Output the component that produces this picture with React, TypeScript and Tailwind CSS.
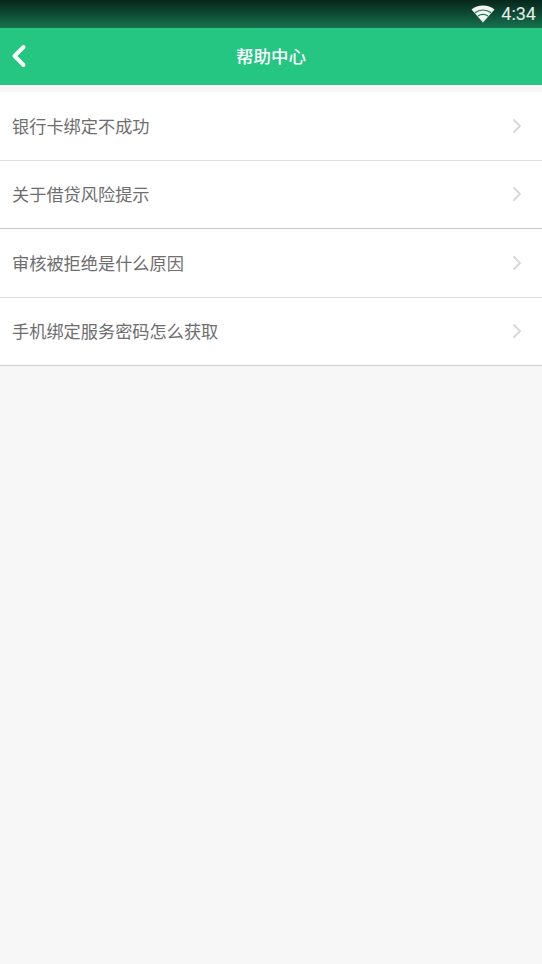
import { ChevronLeft, ChevronRight } from "lucide-react"

const items = [
  { title: "银行卡绑定不成功", h: "h-[69px]", line: "border-[#e2e2e2]" },
  { title: "关于借贷风险提示", h: "h-[68px]", line: "border-[#c9c9c9]" },
  { title: "审核被拒绝是什么原因", h: "h-[69px]", line: "border-[#dcdcdc]" },
  { title: "手机绑定服务密码怎么获取", h: "h-[68px]", line: "border-[#cfcfcf]" },
]

export default function App() {
  return (
    <div
      className="flex h-[964px] w-[542px] flex-col overflow-hidden bg-[#f7f7f7]"
      style={{ fontFamily: '"Noto Sans CJK SC", "Liberation Sans", sans-serif' }}
    >
      <div className="flex h-[28px] items-center justify-end bg-gradient-to-b from-[#07261b] to-[#16744f] pr-[6px]">
        <svg width="24" height="18" viewBox="0 0 24 18" className="mr-[6px] mb-[1px]">
          <path d="M12 17.5 0.5 4.6C3.6 2 7.6 0.5 12 0.5s8.4 1.5 11.500 4.100Z" fill="#fff" opacity="0.95" />
          <path d="M4 7.700C6.200 6 9 5 12 5s5.800 1 8 2.700" stroke="#16744f" strokeWidth="1.100" fill="none" />
          <path d="M7 11C8.400 10 10.100 9.400 12 9.400s3.600 0.600 5 1.600" stroke="#16744f" strokeWidth="1.100" fill="none" />
        </svg>
        <span className="text-[18px] leading-none text-white/90" style={{ fontFamily: "Roboto, sans-serif" }}>
          4:34
        </span>
      </div>

      <div className="relative flex h-[57px] items-center justify-center bg-[#25c681]">
        <ChevronLeft className="absolute left-[1px] top-[10px] h-[36px] w-[36px] text-white" strokeWidth={2.600} />
        <span className="text-[17.500px] font-medium text-white">帮助中心</span>
      </div>

      <div className="mt-[7px] flex flex-col bg-white">
        {items.map((item) => (
          <div
            key={item.title}
            className={`flex items-center justify-between border-b pb-[1px] pl-[12px] pr-[13px] ${item.h} ${item.line}`}
          >
            <span className="text-[17.200px] text-[#6e6e6e]">{item.title}</span>
            <ChevronRight className="h-[24px] w-[24px] text-[#d9d9d9]" strokeWidth={2} />
          </div>
        ))}
      </div>
    </div>
  )
}
